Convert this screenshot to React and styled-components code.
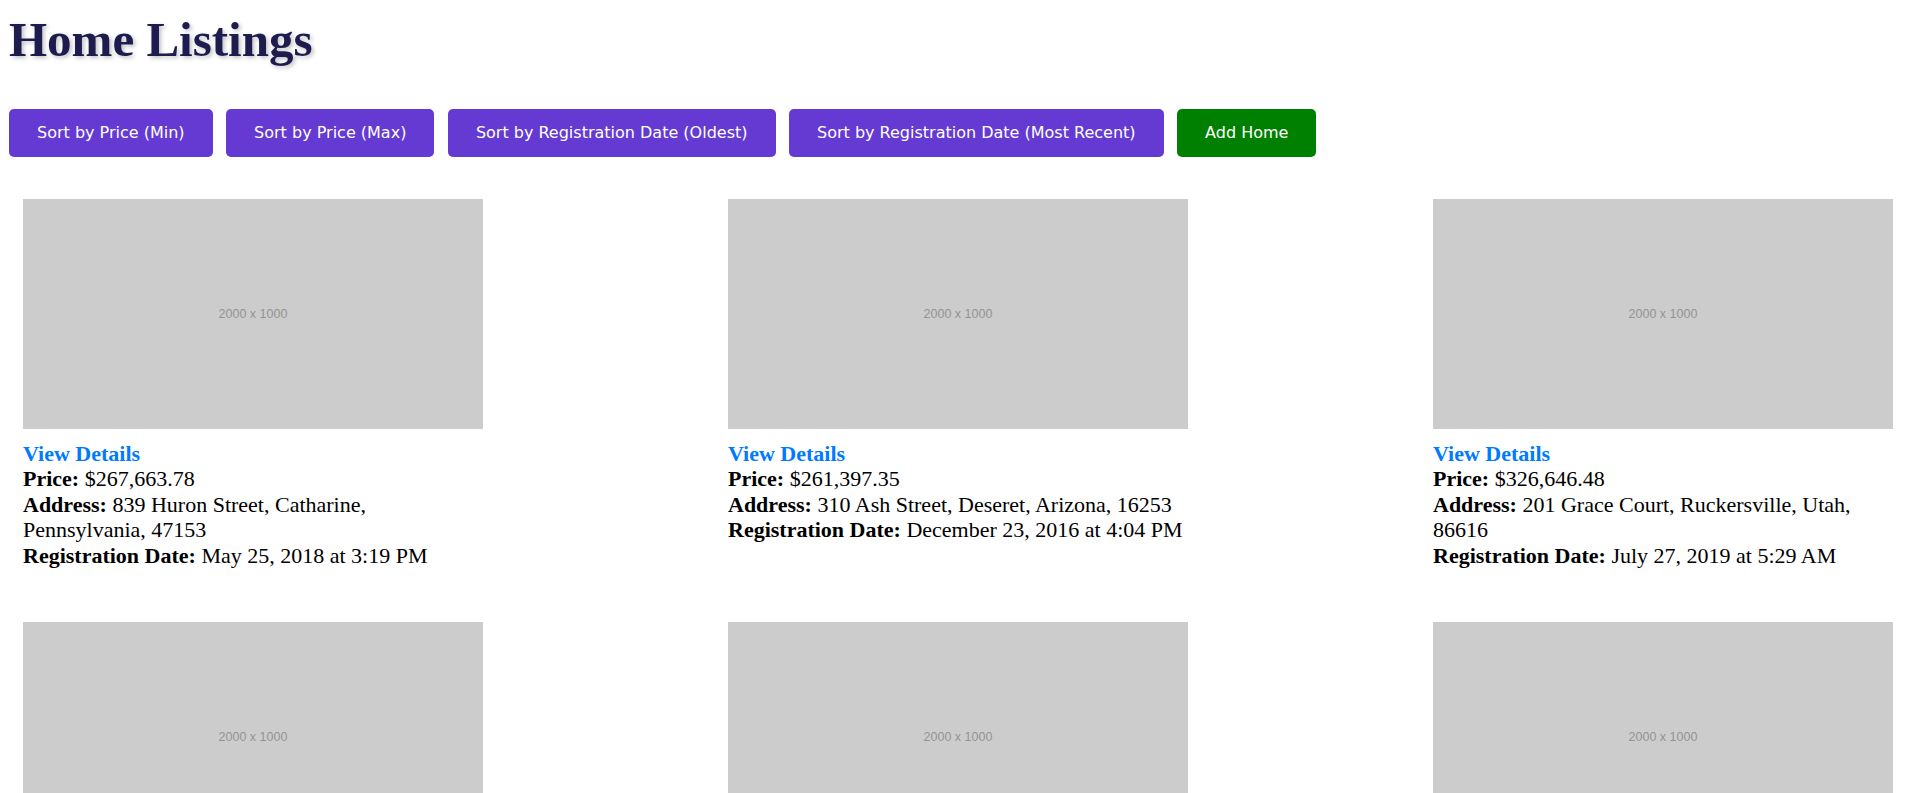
import React, { useState } from 'react'
import styled, { createGlobalStyle } from 'styled-components'

const HOMES = [
    { id: 1, price: 267663.78, address: '839 Huron Street, Catharine, Pennsylvania, 47153', date: '2018-05-25T15:19:00' },
    { id: 2, price: 261397.35, address: '310 Ash Street, Deseret, Arizona, 16253', date: '2016-12-23T16:04:00' },
    { id: 3, price: 326646.48, address: '201 Grace Court, Ruckersville, Utah, 86616', date: '2019-07-27T05:29:00' },
    { id: 4, price: 198402.11, address: '57 Lincoln Road, Brecon, Ohio, 30194', date: '2017-03-14T09:42:00' },
    { id: 5, price: 352118.9, address: '744 Dekoven Court, Sanford, Maine, 61822', date: '2020-01-08T11:15:00' },
    { id: 6, price: 287540.02, address: '12 Bushwick Place, Ola, Oregon, 50371', date: '2015-10-02T19:37:00' },
    { id: 7, price: 241976.55, address: '408 Hemlock Street, Cressey, Texas, 72840', date: '2018-11-19T07:08:00' },
    { id: 8, price: 309213.4, address: '95 Norfolk Street, Tyhee, Nevada, 28465', date: '2016-06-30T13:51:00' },
    { id: 9, price: 276051.67, address: '630 Oriental Court, Kaka, Idaho, 83027', date: '2019-02-04T22:26:00' },
    { id: 10, price: 223890.14, address: '1 Seagate Avenue, Rivers, Kansas, 44196', date: '2017-08-21T10:03:00' },
    { id: 11, price: 338764.29, address: '276 Lake Place, Eastvale, Iowa, 19583', date: '2020-04-12T18:44:00' },
    { id: 12, price: 254307.81, address: '83 Tampa Court, Hanover, Vermont, 67219', date: '2015-12-27T06:30:00' },
]

const formatPrice = (value) =>
    '$' + value.toLocaleString('en-US', { minimumFractionDigits: 2, maximumFractionDigits: 2 })

const formatDate = (iso) => {
    const d = new Date(iso)
    const day = d.toLocaleDateString('en-US', { month: 'long', day: 'numeric', year: 'numeric' })
    const time = d.toLocaleTimeString('en-US', { hour: 'numeric', minute: '2-digit' })
    return `${day} at ${time}`
}

const GlobalStyle = createGlobalStyle`
    body {
        margin: 0;
        background: #fff;
        font-family: "Liberation Serif", "Times New Roman", serif;
    }
`

const Page = styled.div`
    padding: 12px 9px 40px;
`

const Title = styled.h1`
    margin: 0 0 42px;
    font-size: 49px;
    line-height: 55px;
    font-weight: bold;
    color: #1e1b4f;
    text-shadow: 2px 2px 4px rgba(0, 0, 0, 0.25);
`

const Toolbar = styled.div`
    display: flex;
    gap: 13.5px;
    margin-bottom: 28px;
`

const Button = styled.button`
    border: none;
    border-radius: 5px;
    padding: 15px 28px;
    background: ${(p) => (p.$add ? '#008000' : '#643ad3')};
    color: #fff;
    font-family: "DejaVu Sans", Verdana, sans-serif;
    font-size: 16px;
    line-height: 18px;
    cursor: pointer;
`

const Grid = styled.div`
    display: grid;
    grid-template-columns: repeat(3, 488px);
    column-gap: 217px;
    row-gap: 26px;
`

const Card = styled.div`
    padding: 14px;
`

const Placeholder = styled.div`
    width: 460px;
    height: 230px;
    background: #cccccc;
    display: flex;
    align-items: center;
    justify-content: center;
    color: #939393;
    font-family: "Liberation Sans", Arial, sans-serif;
    font-size: 12.5px;
`

const Info = styled.div`
    margin-top: 12px;
    width: 460px;
    font-size: 22px;
    line-height: 25.4px;
    color: #000;
`

const DetailsLink = styled.a`
    display: block;
    color: #007bff;
    font-weight: bold;
    text-decoration: none;
`

const Line = styled.div``

const HomeListings = () => {
    const [homes, setHomes] = useState(HOMES)

    const sortBy = (key, dir) => {
        const sorted = [...homes].sort((a, b) => {
            const va = key === 'date' ? new Date(a.date).getTime() : a.price
            const vb = key === 'date' ? new Date(b.date).getTime() : b.price
            return dir === 'asc' ? va - vb : vb - va
        })
        setHomes(sorted)
    }

    return (
        <Page>
            <GlobalStyle />
            <Title>Home Listings</Title>
            <Toolbar>
                <Button onClick={() => sortBy('price', 'asc')}>Sort by Price (Min)</Button>
                <Button onClick={() => sortBy('price', 'desc')}>Sort by Price (Max)</Button>
                <Button onClick={() => sortBy('date', 'asc')}>Sort by Registration Date (Oldest)</Button>
                <Button onClick={() => sortBy('date', 'desc')}>Sort by Registration Date (Most Recent)</Button>
                <Button $add>Add Home</Button>
            </Toolbar>
            <Grid>
                {homes.map((home) => (
                    <Card key={home.id}>
                        <Placeholder>2000 x 1000</Placeholder>
                        <Info>
                            <DetailsLink href="#">View Details</DetailsLink>
                            <Line><b>Price:</b> {formatPrice(home.price)}</Line>
                            <Line><b>Address:</b> {home.address}</Line>
                            <Line><b>Registration Date:</b> {formatDate(home.date)}</Line>
                        </Info>
                    </Card>
                ))}
            </Grid>
        </Page>
    )
}

export default HomeListings
